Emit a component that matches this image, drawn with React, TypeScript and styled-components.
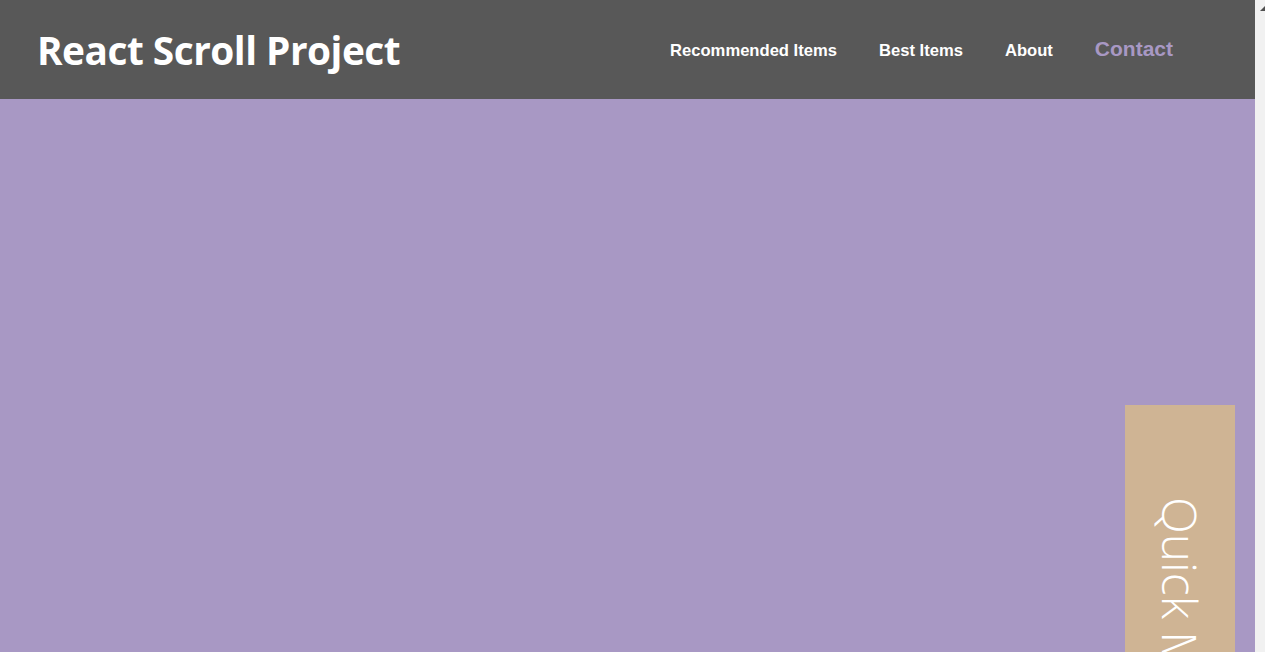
import React from "react";
import styled, { createGlobalStyle } from "styled-components";

const GlobalStyle = createGlobalStyle`
  html, body { margin: 0; padding: 0; }
  body { background: #a898c4; font-family: "Open Sans", sans-serif; }
`;

const Header = styled.header`
  height: 99px;
  background: #585858;
  display: flex;
  align-items: center;
  justify-content: space-between;
  padding: 0 92px 0 37px;
  box-sizing: border-box;
`;

const Title = styled.h1`
  margin: 0;
  color: #ffffff;
  font-family: "Open Sans", sans-serif;
  font-weight: 700;
  font-size: 38.8px;
  letter-spacing: -0.5px;
`;

const Nav = styled.nav`
  display: flex;
  align-items: center;
  gap: 42px;
  margin-top: 2px;
`;

const NavLink = styled.a<{ $active?: boolean }>`
  font-family: "Liberation Sans", Arial, sans-serif;
  font-weight: 700;
  font-size: ${(p) => (p.$active ? "21px" : "16.6px")};
  color: ${(p) => (p.$active ? "#a898c4" : "#ffffff")};
  text-decoration: none;
  cursor: pointer;
  margin-top: ${(p) => (p.$active ? "-3px" : "0")};
`;

const Section = styled.section`
  height: 1400px;
  background: #a898c4;
`;

const QuickMenu = styled.div`
  position: fixed;
  left: 1125px;
  top: 405px;
  width: 110px;
  height: 400px;
  background: #cfb494;
  display: flex;
  justify-content: center;
  padding-top: 92px;
  box-sizing: border-box;
`;

const QuickText = styled.span`
  writing-mode: vertical-rl;
  color: #ffffff;
  font-family: "Open Sans", sans-serif;
  font-weight: 300;
  font-size: 48px;
  line-height: 1;
  white-space: nowrap;
`;

const ScrollTrack = styled.div`
  position: fixed;
  top: 0;
  right: 0;
  width: 10px;
  height: 100vh;
  background: #f1f1f1;
`;

const ScrollArrow = styled.div`
  position: absolute;
  top: 6px;
  right: 0;
  width: 0;
  height: 0;
  border-left: 5px solid transparent;
  border-bottom: 5px solid #505050;
`;

export default function App() {
  return (
    <>
      <GlobalStyle />
      <Header>
        <Title>React Scroll Project</Title>
        <Nav>
          <NavLink>Recommended Items</NavLink>
          <NavLink>Best Items</NavLink>
          <NavLink>About</NavLink>
          <NavLink $active>Contact</NavLink>
        </Nav>
      </Header>
      <Section />
      <Section />
      <QuickMenu>
        <QuickText>Quick Menu</QuickText>
      </QuickMenu>
      <ScrollTrack>
        <ScrollArrow />
      </ScrollTrack>
    </>
  );
}
